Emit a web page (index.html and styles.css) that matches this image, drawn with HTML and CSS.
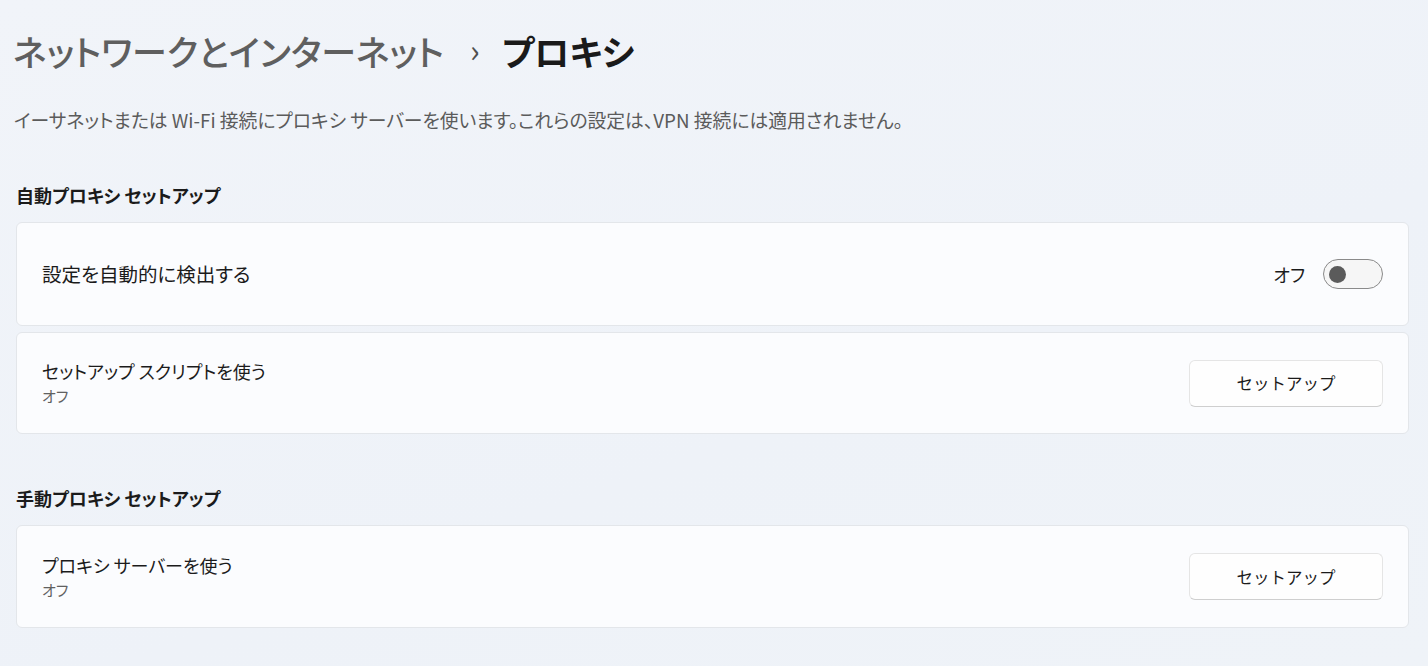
FILE: index.html
```html
<!DOCTYPE html>
<html lang="ja">
<head>
  <meta charset="UTF-8" />
  <title>プロキシ</title>
  <link rel="stylesheet" href="styles.css">
</head>
<body>
  <h1 class="crumbs">
    <span class="crumb-parent">ネットワークとインターネット</span>
    <span class="crumb-sep">›</span>
    <span class="crumb-current">プロキシ</span>
  </h1>

  <p class="intro">イーサネットまたは Wi-Fi 接続にプロキシ サーバーを使います。これらの設定は、VPN 接続には適用されません。</p>

  <h2 class="section-title">自動プロキシ セットアップ</h2>
  <div class="card">
    <div class="card-text">
      <div class="card-label wide">設定を自動的に検出する</div>
    </div>
    <div class="card-action">
      <span class="toggle-state">オフ</span>
      <span class="toggle"><span class="knob"></span></span>
    </div>
  </div>
  <div class="card">
    <div class="card-text">
      <div class="card-label">セットアップ スクリプトを使う</div>
      <div class="card-sub">オフ</div>
    </div>
    <button class="btn">セットアップ</button>
  </div>

  <h2 class="section-title second">手動プロキシ セットアップ</h2>
  <div class="card">
    <div class="card-text">
      <div class="card-label">プロキシ サーバーを使う</div>
      <div class="card-sub">オフ</div>
    </div>
    <button class="btn">セットアップ</button>
  </div>
</body>
</html>
```

FILE: styles.css
```css
body {
  margin: 0;
  padding: 0 19px 0 16px;
  background: linear-gradient(160deg, #f1f4f9 0%, #eef2f8 60%, #eff3f8 100%);
  font-family: "Noto Sans CJK JP", "Noto Sans", sans-serif;
  font-feature-settings: "palt";
  color: #1b1b1b;
  height: 666px;
  overflow: hidden;
}

.crumbs { margin: 0 0 0 -3px; padding-top: 22px; height: 58px; font-size: 35px; font-weight: 600; line-height: 56px; display: flex; align-items: center; }
.crumb-parent { color: #5f5f5f; font-weight: 500; }
.crumb-sep { color: #4f4f4f; font-size: 32px; font-weight: 400; margin: -4px 22px 0 26px; }
.crumb-current { color: #1a1a1a; }

.intro { margin: 26px 0 0 -2px; font-size: 18.8px; line-height: 28px; color: #5b5b5b; }

.section-title { margin: 49px 0 0; font-size: 18px; font-weight: 600; line-height: 24px; height: 24px; }
.section-title.second { margin-top: 52px; }

.card {
  margin-top: 6px;
  height: 102px;
  box-sizing: border-box;
  background: #fbfcfe;
  border: 1px solid #e3e6ea;
  border-radius: 6px;
  display: flex;
  align-items: center;
  justify-content: space-between;
  padding: 0 25px 0 25px;
}
.section-title + .card { margin-top: 15px; height: 104px; }
.section-title.second + .card { margin-top: 15px; height: 103px; }

.card-label { font-size: 18px; line-height: 26px; color: #1b1b1b; }
.card-label.wide { font-size: 19.5px; }
.card-sub { font-size: 15px; line-height: 24px; color: #616161; }

.card-action { display: flex; align-items: center; gap: 18px; }
.toggle-state { font-size: 18px; color: #1b1b1b; }
.toggle {
  width: 60px; height: 30px;
  box-sizing: border-box;
  border: 1.5px solid #8a8a8a;
  border-radius: 15px;
  background: #f6f6f6;
  display: flex; align-items: center;
  padding-left: 5px;
}
.knob { width: 17px; height: 17px; border-radius: 50%; background: #5b5b5b; }

.btn {
  width: 194px; height: 47px;
  font-family: inherit;
  font-size: 16.5px;
  color: #1b1b1b;
  background: #fefefe;
  border: 1px solid #e5e5e5;
  border-bottom-color: #cfcfcf;
  border-radius: 6px;
}
```
